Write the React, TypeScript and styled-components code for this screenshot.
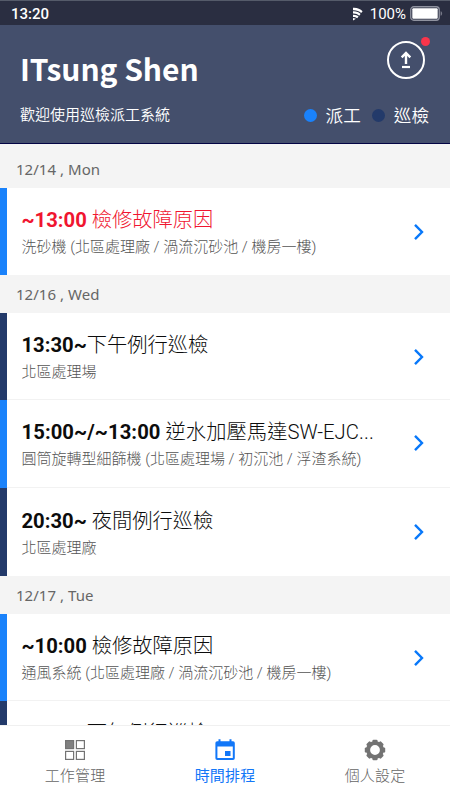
import React from "react";
import styled, { createGlobalStyle } from "styled-components";

const GlobalStyle = createGlobalStyle`
  * { box-sizing: border-box; }
  body { margin: 0; background: #fff; font-family: Roboto, "Noto Sans CJK TC", sans-serif; }
`;

const BLUE = "#1a82fb";
const NAVY = "#233a6a";

const Screen = styled.div`
  width: 450px;
  height: 800px;
  display: flex;
  flex-direction: column;
  overflow: hidden;
  background: #fff;
`;

const StatusBar = styled.div`
  height: 25px;
  flex: none;
  display: flex;
  align-items: center;
  padding: 2px 7px 0 11px;
  background: #2a2e41;
  border-top: 1px solid #555b6a;
  color: #fff;
`;

const Clock = styled.span`
  flex: 1;
  font-size: 15px;
  line-height: 22px;
  font-weight: 500;
`;

const BatteryText = styled.span`
  font-size: 15px;
  line-height: 22px;
  margin: 0 4px 0 7px;
`;

const Header = styled.header`
  height: 119px;
  flex: none;
  display: flex;
  justify-content: space-between;
  padding: 0 21px 0 20px;
  background: #444f6c;
  border-bottom: 1px solid #030444;
  color: #fff;
`;

const Greeting = styled.div`
  padding-top: 18px;
`;

const UserName = styled.h1`
  margin: 0;
  height: 50px;
  font: 700 30px/50px "Noto Sans CJK TC", sans-serif;
  letter-spacing: -0.05px;
`;

const Welcome = styled.div`
  margin-top: 9px;
  font: 350 15px/24px "Noto Sans CJK TC", sans-serif;
`;

const HeaderSide = styled.div`
  display: flex;
  flex-direction: column;
  align-items: flex-end;
`;

const UploadButton = styled.button`
  position: relative;
  width: 38px;
  height: 38px;
  margin: 16px 4px 0 0;
  padding: 0;
  border: 2px solid #fff;
  border-radius: 50%;
  background: none;
  display: flex;
  align-items: center;
  justify-content: center;
`;

const Alert = styled.i`
  position: absolute;
  top: -6px;
  right: -7px;
  width: 9px;
  height: 9px;
  border-radius: 50%;
  background: #f8354b;
`;

const Legend = styled.div`
  display: flex;
  align-items: center;
  margin-top: 22px;
  font: 350 17.6px/28px "Noto Sans CJK TC", sans-serif;
`;

const LegendItem = styled.span`
  display: flex;
  align-items: center;
  gap: 9px;
  margin-left: 11px;
`;

const Dot = styled.i<{ $color: string }>`
  width: 13px;
  height: 13px;
  border-radius: 50%;
  background: ${(p) => p.$color};
`;

const List = styled.main`
  flex: 1;
  min-height: 0;
  overflow: hidden;
`;

const DateHeading = styled.h2<{ $height: number }>`
  margin: 0;
  height: ${(p) => p.$height}px;
  display: flex;
  align-items: flex-end;
  padding: 0 16px 8px;
  background: #f4f4f4;
  color: #666;
  font: 400 15px/22px "Noto Sans", sans-serif;
  letter-spacing: 0.04px;
`;

const Row = styled.article<{ $color: string; $height: number }>`
  height: ${(p) => p.$height}px;
  display: flex;
  border-left: 7px solid ${(p) => p.$color};
`;

const RowBody = styled.div<{ $divided?: boolean }>`
  flex: 1;
  display: flex;
  align-items: flex-start;
  justify-content: space-between;
  padding: 17.3px 25.5px 0 14.5px;
  border-bottom: ${(p) => (p.$divided ? "1px solid #f2f2f2" : "none")};
`;

const Title = styled.div<{ $urgent?: boolean; $spacing?: number }>`
  font-size: 20.25px;
  line-height: 30px;
  font-weight: 300;
  letter-spacing: ${(p) => p.$spacing ?? 0}px;
  white-space: pre;
  color: ${(p) => (p.$urgent ? "#f01530" : "#0c0c0c")};
`;

const Time = styled.b`
  font-weight: 700;
`;

const Place = styled.div`
  font-size: 15px;
  line-height: 24px;
  font-weight: 300;
  white-space: pre;
  color: #555;
`;

const TabBar = styled.nav`
  height: 75px;
  flex: none;
  display: grid;
  grid-template-columns: repeat(3, 1fr);
  border-top: 1px solid #f0f0f0;
  background: #fff;
`;

const Tab = styled.a<{ $active?: boolean }>`
  display: flex;
  flex-direction: column;
  align-items: center;
  padding-top: 13px;
  color: ${(p) => (p.$active ? "#1277f8" : "#666")};
  font: ${(p) => (p.$active ? 400 : 300)} 15px/24px "Noto Sans CJK TC", sans-serif;
  letter-spacing: 0.15px;
  svg { margin-bottom: 2px; }
`;

const SignalIcon = () => (
  <svg width="11" height="14" viewBox="0 0 11 14" fill="#fff">
    <path d="M1 .8C5 .5 8.3 1.8 10.6 4.2L9.2 6C6.9 4 4.3 3 1 3.2z" />
    <path d="M1 4.2C4.3 4 6.6 5 8.6 6.9L7.2 8.7C5.4 7.2 3.6 6.4 1 6.6z" />
    <path d="M1 7.7C3.2 7.5 5 8.2 6.6 9.6L5.2 11.2C3.8 10.2 2.6 9.8 1 9.9zM1 10.9l3 .9L1 13.6z" />
  </svg>
);

const BatteryIcon = () => (
  <svg width="33" height="16" viewBox="0 0 33 16">
    <rect x=".75" y=".75" width="28.5" height="13.5" rx="3" fill="none" stroke="#9093a0" strokeWidth="1.3" />
    <rect x="2.3" y="2.3" width="25.4" height="10.4" rx="1" fill="#fff" />
    <path d="M30.6 5.2c2 .5 2 4 0 4.6z" fill="#777a88" />
  </svg>
);

const UploadIcon = () => (
  <svg width="12" height="18" viewBox="0 0 12 18" fill="none" stroke="#fff">
    <path d="M6 13V2.2M1.7 6.3 6 2l4.3 4.3" strokeWidth="2.4" />
    <path d="M2 16h8" strokeWidth="2.2" />
  </svg>
);

const ChevronIcon = styled.svg`
  margin-top: 17.5px;
`;

const Chevron = () => (
  <ChevronIcon width="12" height="18" viewBox="0 0 12 18" fill="none" stroke="#0878fa" strokeWidth="2.4">
    <path d="m2 1.8 7 7.2-7 7.2" />
  </ChevronIcon>
);

const GridIcon = () => (
  <svg width="22" height="22" viewBox="0 0 22 22" fill="none" stroke="#737373" strokeWidth="1.2">
    <rect x="1.6" y="1.6" width="8" height="8" fill="#808080" />
    <rect x="12.4" y="1.6" width="8" height="8" />
    <rect x="1.6" y="12.4" width="8" height="8" />
    <rect x="12.4" y="12.4" width="8" height="8" />
  </svg>
);

const CalendarIcon = () => (
  <svg width="22" height="22" viewBox="0 0 22 22" fill="#1277f8">
    <path fillRule="evenodd" d="M4.5.3h2v2h9v-2h2v2H19a1.8 1.8 0 0 1 1.8 1.8v15.1A1.8 1.8 0 0 1 19 21H3.2a1.8 1.8 0 0 1-1.8-1.8V4.1a1.8 1.8 0 0 1 1.8-1.8h1.3zM3.4 7.4V19h15.4V7.4zM11 12h5.5v5H11z" />
  </svg>
);

const GEAR_TEETH = [0, 45, 90, 135, 180, 225, 270, 315];

const GearIcon = () => (
  <svg width="22" height="22" viewBox="0 0 22 22" fill="#737373">
    <circle cx="11" cy="11" r="6.9" fill="none" stroke="#737373" strokeWidth="4" />
    {GEAR_TEETH.map((angle) => (
      <rect key={angle} x="8.4" y="0.8" width="5.2" height="4" rx="1.2" transform={`rotate(${angle} 11 11)`} />
    ))}
  </svg>
);

type Job = {
  time: string;
  name: string;
  place?: string;
  color: string;
  height: number;
  urgent?: boolean;
  divided?: boolean;
  spacing?: number;
};
type Day = { label: string; height: number; jobs: Job[] };

const DAYS: Day[] = [
  {
    label: "12/14 , Mon",
    height: 44,
    jobs: [{ time: "~13:00", name: " 檢修故障原因", place: "洗砂機 (北區處理廠 / 渦流沉砂池 / 機房一樓)", color: BLUE, height: 87, urgent: true }],
  },
  {
    label: "12/16 , Wed",
    height: 38,
    jobs: [
      { time: "13:30~", name: "下午例行巡檢", place: "北區處理場", color: NAVY, height: 86.6, divided: true },
      { time: "15:00~/~13:00", name: " 逆水加壓馬達SW-EJC...", place: "圓筒旋轉型細篩機 (北區處理場 / 初沉池 / 浮渣系統)", color: BLUE, height: 88.8, divided: true, spacing: 0.07 },
      { time: "20:30~", name: " 夜間例行巡檢", place: "北區處理廠", color: NAVY, height: 88 },
    ],
  },
  {
    label: "12/17 , Tue",
    height: 37.6,
    jobs: [
      { time: "~10:00", name: " 檢修故障原因", place: "通風系統 (北區處理廠 / 渦流沉砂池 / 機房一樓)", color: BLUE, height: 87, divided: true },
      { time: "13:30~", name: "下午例行巡檢", color: NAVY, height: 88 },
    ],
  },
];

export default function App() {
  return (
    <Screen>
      <GlobalStyle />
      <StatusBar>
        <Clock>13:20</Clock>
        <SignalIcon />
        <BatteryText>100%</BatteryText>
        <BatteryIcon />
      </StatusBar>
      <Header>
        <Greeting>
          <UserName>ITsung Shen</UserName>
          <Welcome>歡迎使用巡檢派工系統</Welcome>
        </Greeting>
        <HeaderSide>
          <UploadButton aria-label="upload">
            <UploadIcon />
            <Alert />
          </UploadButton>
          <Legend>
            <LegendItem><Dot $color={BLUE} />派工</LegendItem>
            <LegendItem><Dot $color={NAVY} />巡檢</LegendItem>
          </Legend>
        </HeaderSide>
      </Header>
      <List>
        {DAYS.map((day) => (
          <section key={day.label}>
            <DateHeading $height={day.height}>{day.label}</DateHeading>
            {day.jobs.map((job) => (
              <Row key={job.time + job.name} $color={job.color} $height={job.height}>
                <RowBody $divided={job.divided}>
                  <div>
                    <Title $urgent={job.urgent} $spacing={job.spacing}><Time>{job.time}</Time>{job.name}</Title>
                    {job.place && <Place>{job.place}</Place>}
                  </div>
                  <Chevron />
                </RowBody>
              </Row>
            ))}
          </section>
        ))}
      </List>
      <TabBar>
        <Tab><GridIcon />工作管理</Tab>
        <Tab $active><CalendarIcon />時間排程</Tab>
        <Tab><GearIcon />個人設定</Tab>
      </TabBar>
    </Screen>
  );
}
